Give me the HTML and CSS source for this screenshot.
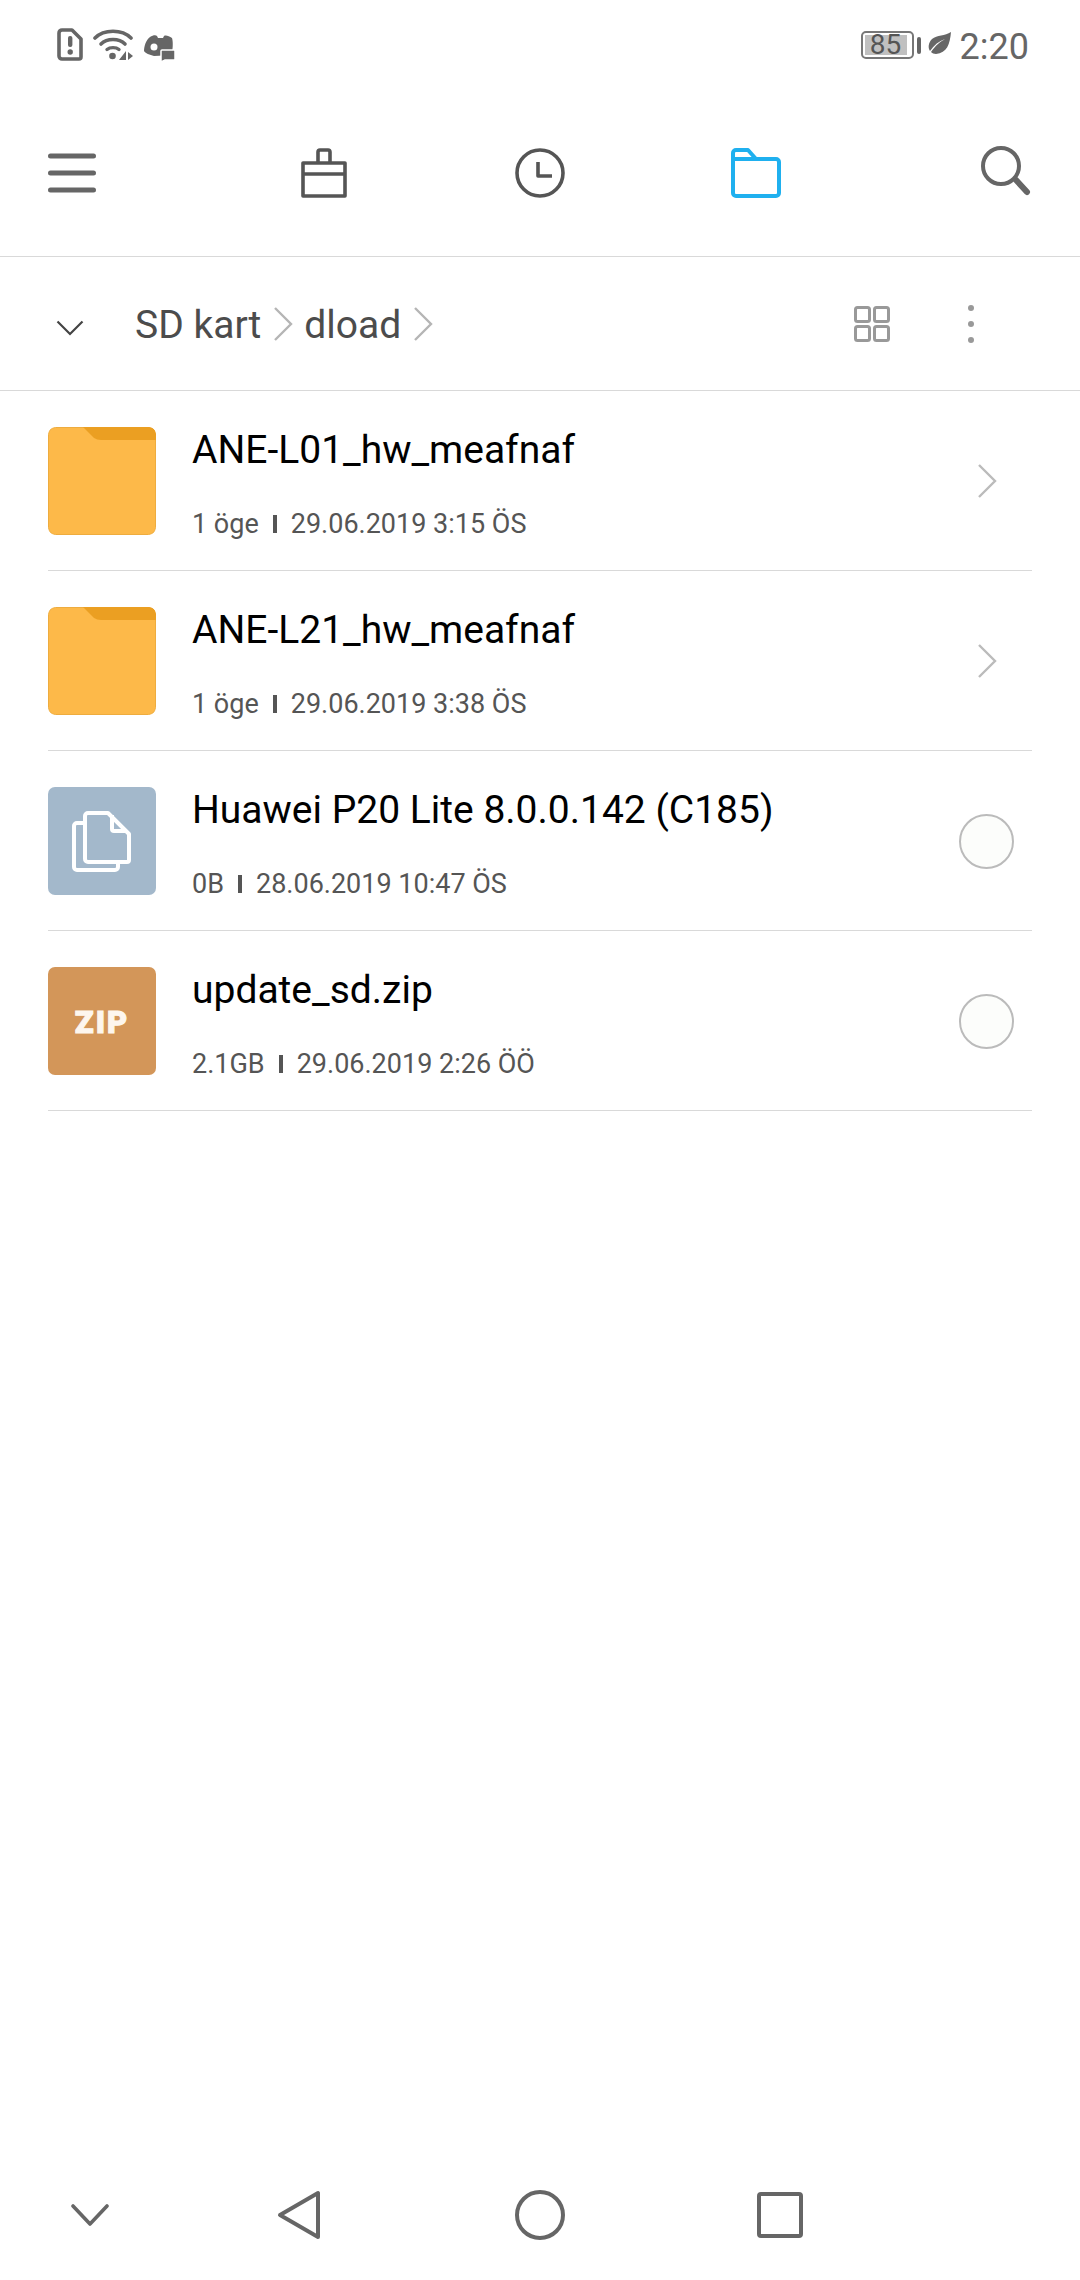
FILE: index.html
```html
<!DOCTYPE html>
<html lang="en">
<head>
  <meta charset="UTF-8" />
  <title>Dosyalar</title>
  <link rel="stylesheet" href="styles.css">
</head>
<body>
  <div class="phone">

    <div class="status-bar">
      <div class="status-left">
        <svg class="ico-sim" width="26" height="33" viewBox="0 0 26 33">
          <path d="M5 2h10l9 9v18a2 2 0 0 1-2 2H5a3 3 0 0 1-3-3V5a3 3 0 0 1 3-3z" fill="none" stroke="#666" stroke-width="3.6" stroke-linejoin="round"/>
          <rect x="11" y="8" width="4.4" height="11" rx="2" fill="#666"/>
          <circle cx="13.2" cy="24" r="2.7" fill="#666"/>
        </svg>
        <svg class="ico-wifi" width="40" height="33" viewBox="0 0 40 33">
          <path d="M2 10C11 1 29 1 38 10" fill="none" stroke="#666" stroke-width="3.6" stroke-linecap="round"/>
          <path d="M8 16C14 10 26 10 32 16" fill="none" stroke="#666" stroke-width="3.6" stroke-linecap="round"/>
          <path d="M14 21.500C17 19 23 19 26 21.500" fill="none" stroke="#666" stroke-width="3.4" stroke-linecap="round"/>
          <circle cx="19.500" cy="28" r="3.300" fill="#666"/>
          <path d="M33 23v9h-7zM35 24v8l5-4z" fill="#666"/>
        </svg>
        <svg class="ico-game" width="33" height="27" viewBox="0 0 33 27">
          <path d="M7 2C10 0 13 0 14 1l1 2h5l1-2c2-1 5 0 8 2 1 3 1 9 0 14-5 3-11 4-18 4-4-1-9-3-10-5C1 11 3 5 7 2z" fill="#666"/>
          <circle cx="11" cy="12" r="3.500" fill="#fff"/>
          <path d="M19 15h12a1 1 0 0 1 1 1v8a1 1 0 0 1-1 1H22l-4 2V16a1 1 0 0 1 1-1z" fill="#666" stroke="#fff" stroke-width="1.500"/>
        </svg>
      </div>
      <div class="status-right">
        <div class="battery"><span class="battery-level">85</span></div>
        <div class="battery-tip"></div>
        <svg class="ico-leaf" width="23" height="24" viewBox="0 0 23 24">
          <path d="M23 0C22 12 19 21 8 22 6 22 4 21 3 20 8 13 12 10 17 7 11 9 6 13 2 19 0 16 0 11 4 7 9 3 17 4 23 0z" fill="#666"/>
        </svg>
        <span class="clock">2:20</span>
      </div>
    </div>

    <div class="toolbar">
      <svg class="ico-menu" width="48" height="40" viewBox="0 0 48 40">
        <path d="M2.500 3h43M2.500 20h43M2.500 37h43" stroke="#666" stroke-width="5" stroke-linecap="round"/>
      </svg>
      <div class="tabs">
        <div class="tab">
          <svg width="46" height="50" viewBox="0 0 46 50">
            <path d="M2 15h42v33H2zM2 26h42M17 15V4a2 2 0 0 1 2-2h8a2 2 0 0 1 2 2v11" fill="none" stroke="#555" stroke-width="3.600" stroke-linejoin="round"/>
          </svg>
        </div>
        <div class="tab">
          <svg width="50" height="50" viewBox="0 0 50 50">
            <circle cx="25" cy="25" r="23" fill="none" stroke="#555" stroke-width="3.600"/>
            <path d="M23 14v14h14" fill="none" stroke="#555" stroke-width="3.600" stroke-linejoin="round"/>
          </svg>
        </div>
        <div class="tab">
          <svg width="50" height="50" viewBox="0 0 50 50">
            <path d="M5 2h12l8 9h20a3 3 0 0 1 3 3v31a3 3 0 0 1-3 3H5a3 3 0 0 1-3-3V5a3 3 0 0 1 3-3zM2 11h23" fill="none" stroke="#1fb0ef" stroke-width="4" stroke-linejoin="round"/>
          </svg>
        </div>
      </div>
      <svg class="ico-search" width="50" height="50" viewBox="0 0 50 50">
        <circle cx="20" cy="20" r="18" fill="none" stroke="#666" stroke-width="4"/>
        <path d="M35 34l11 12" stroke="#666" stroke-width="6" stroke-linecap="round"/>
      </svg>
    </div>

    <div class="breadcrumb">
      <svg class="crumb-toggle" width="28" height="16" viewBox="0 0 28 16">
        <path d="M1.500 1.500L14 14 26.500 1.500" fill="none" stroke="#444" stroke-width="2.200"/>
      </svg>
      <span class="crumb">SD kart</span>
      <svg class="crumb-sep" width="20" height="34" viewBox="0 0 20 34">
        <path d="M2 1l16 16L2 33" fill="none" stroke="#b5b5b5" stroke-width="2.400"/>
      </svg>
      <span class="crumb">dload</span>
      <svg class="crumb-sep" width="20" height="34" viewBox="0 0 20 34">
        <path d="M2 1l16 16L2 33" fill="none" stroke="#b5b5b5" stroke-width="2.400"/>
      </svg>
      <div class="crumb-actions">
        <svg width="36" height="36" viewBox="0 0 36 36">
          <g fill="none" stroke="#999" stroke-width="3">
            <rect x="1.500" y="1.500" width="14" height="14" rx="2"/>
            <rect x="20.500" y="1.500" width="14" height="14" rx="2"/>
            <rect x="1.500" y="20.500" width="14" height="14" rx="2"/>
            <rect x="20.500" y="20.500" width="14" height="14" rx="2"/>
          </g>
        </svg>
        <svg width="6" height="38" viewBox="0 0 6 38">
          <g fill="#999"><circle cx="3" cy="3" r="3"/><circle cx="3" cy="19" r="3"/><circle cx="3" cy="35" r="3"/></g>
        </svg>
      </div>
    </div>

    <div class="file-list">
      <div class="file-row">
        <svg class="file-icon" width="108" height="108" viewBox="0 0 108 108">
          <rect x="0.500" y="0.500" width="107" height="107" rx="7" fill="#fdb949" stroke="#eeac3f"/>
          <path d="M35 0H101a7 7 0 0 1 7 7V13H53Q49 13 46 11z" fill="#eb9f22"/>
        </svg>
        <div class="file-info">
          <div class="file-name">ANE-L01_hw_meafnaf</div>
          <div class="file-meta"><span>1 öge</span><i class="meta-sep"></i><span>29.06.2019 3:15 ÖS</span></div>
        </div>
        <svg class="row-chevron" width="20" height="34" viewBox="0 0 20 34">
          <path d="M2 1l16 16L2 33" fill="none" stroke="#bbb" stroke-width="2.400"/>
        </svg>
      </div>

      <div class="file-row">
        <svg class="file-icon" width="108" height="108" viewBox="0 0 108 108">
          <rect x="0.500" y="0.500" width="107" height="107" rx="7" fill="#fdb949" stroke="#eeac3f"/>
          <path d="M35 0H101a7 7 0 0 1 7 7V13H53Q49 13 46 11z" fill="#eb9f22"/>
        </svg>
        <div class="file-info">
          <div class="file-name">ANE-L21_hw_meafnaf</div>
          <div class="file-meta"><span>1 öge</span><i class="meta-sep"></i><span>29.06.2019 3:38 ÖS</span></div>
        </div>
        <svg class="row-chevron" width="20" height="34" viewBox="0 0 20 34">
          <path d="M2 1l16 16L2 33" fill="none" stroke="#bbb" stroke-width="2.400"/>
        </svg>
      </div>

      <div class="file-row">
        <div class="file-icon icon-doc">
          <svg width="108" height="108" viewBox="0 0 108 108">
            <path d="M37 36h-8a3 3 0 0 0-3 3v41a3 3 0 0 0 3 3h38a3 3 0 0 0 3-3v-5" fill="none" stroke="#fff" stroke-width="4"/>
            <path d="M40 26h20l21 21v26a2 2 0 0 1-2 2H40a3 3 0 0 1-3-3V29a3 3 0 0 1 3-3z" fill="none" stroke="#fff" stroke-width="4" stroke-linejoin="round"/>
            <path d="M64 28v14a2 2 0 0 0 2 2h13" fill="none" stroke="#fff" stroke-width="4"/>
          </svg>
        </div>
        <div class="file-info">
          <div class="file-name">Huawei P20 Lite 8.0.0.142 (C185)</div>
          <div class="file-meta"><span>0B</span><i class="meta-sep"></i><span>28.06.2019 10:47 ÖS</span></div>
        </div>
        <div class="row-radio"></div>
      </div>

      <div class="file-row">
        <div class="file-icon icon-zip">ZIP</div>
        <div class="file-info">
          <div class="file-name">update_sd.zip</div>
          <div class="file-meta"><span>2.1GB</span><i class="meta-sep"></i><span>29.06.2019 2:26 ÖÖ</span></div>
        </div>
        <div class="row-radio"></div>
      </div>
    </div>

    <div class="nav-bar">
      <svg class="nav-down" width="38" height="22" viewBox="0 0 38 22">
        <path d="M2 2L19 20 36 2" fill="none" stroke="#666" stroke-width="3.600" stroke-linecap="round" stroke-linejoin="round"/>
      </svg>
      <svg class="nav-back" width="44" height="50" viewBox="0 0 44 50">
        <path d="M41 3V47L3 25z" fill="none" stroke="#666" stroke-width="4" stroke-linejoin="round"/>
      </svg>
      <svg class="nav-home" width="50" height="50" viewBox="0 0 50 50">
        <circle cx="25" cy="25" r="23" fill="none" stroke="#666" stroke-width="4"/>
      </svg>
      <svg class="nav-recent" width="46" height="46" viewBox="0 0 46 46">
        <rect x="2" y="2" width="42" height="42" rx="2" fill="none" stroke="#666" stroke-width="4"/>
      </svg>
    </div>

  </div>
</body>
</html>
```

FILE: styles.css
```css
body {
  margin: 0;
  background: #fff;
  font-family: Roboto, sans-serif;
}

.phone {
  width: 1080px;
  height: 2280px;
  display: flex;
  flex-direction: column;
  background: #fff;
  overflow: hidden;
}

/* status bar */
.status-bar {
  height: 90px;
  box-sizing: border-box;
  padding: 28px 51px 0 57px;
  display: flex;
  justify-content: space-between;
  align-items: flex-start;
}

.status-left {
  display: flex;
  align-items: flex-start;
}

.ico-wifi {
  margin-left: 10px;
}

.ico-game {
  margin-left: 10px;
  margin-top: 7px;
}

.status-right {
  display: flex;
  align-items: flex-start;
  color: #666;
}

.battery {
  width: 53px;
  height: 28px;
  margin-top: 3px;
  box-sizing: border-box;
  border: 2px solid #777;
  border-radius: 5px;
  padding: 2px;
  display: flex;
}

.battery-level {
  width: 42px;
  background: #c0c0c0;
  color: #555;
  font-size: 28px;
  line-height: 20px;
  text-align: center;
}

.battery-tip {
  width: 4px;
  height: 17px;
  margin: 9px 0 0 3px;
  background: #666;
  border-radius: 2px;
}

.ico-leaf {
  margin: 4px 0 0 7px;
}

.clock {
  margin: 1px 0 0 9px;
  font-size: 36px;
  line-height: 36px;
}

/* tab toolbar */
.toolbar {
  height: 167px;
  box-sizing: border-box;
  padding: 0 49px 58px 48px;
  border-bottom: 1px solid #d9d9d9;
  display: flex;
  align-items: flex-end;
}

.ico-menu {
  margin-bottom: 5px;
}

.tabs {
  display: flex;
  margin-left: 120px;
}

.tab {
  width: 216px;
  display: flex;
  justify-content: center;
}

.ico-search {
  margin: 0 0 2px auto;
}

/* breadcrumb */
.breadcrumb {
  height: 134px;
  box-sizing: border-box;
  padding: 0 0 0 56px;
  border-bottom: 1px solid #d9d9d9;
  display: flex;
  align-items: center;
  color: #4c4c4c;
}

.crumb-toggle {
  margin: 9px 51px 0 0;
}

.crumb {
  margin-top: 2px;
  font-size: 39px;
}

.crumb-sep {
  margin: 0 11px 0 12px;
}

.crumb-actions {
  margin-left: auto;
  margin-right: 106px;
  display: flex;
  align-items: center;
  gap: 78px;
}

/* file list */
.file-list {
  flex: 1;
  padding: 0 48px;
}

.file-row {
  height: 180px;
  box-sizing: border-box;
  border-bottom: 1px solid #d9d9d9;
  display: flex;
  align-items: center;
}

.file-icon {
  width: 108px;
  height: 108px;
  flex: none;
  margin: 0 36px 0 0;
  border-radius: 7px;
}

.icon-doc {
  background: #a3b8cb;
}

.icon-zip {
  background: #d39659;
  color: #fdf6ee;
  font-size: 31px;
  font-weight: 900;
  letter-spacing: 2px;
  line-height: 112px;
  text-align: center;
  -webkit-text-stroke: 1px #fdf6ee;
}

.file-info {
  flex: 1;
  align-self: flex-start;
  padding-top: 35px;
}

.file-name {
  font-size: 39px;
  line-height: 48px;
  color: #000;
}

.file-meta {
  margin-top: 34px;
  font-size: 27px;
  line-height: 32px;
  color: #555;
  display: flex;
  align-items: center;
}

.meta-sep {
  width: 4px;
  height: 18px;
  margin: 0 14px;
  background: #555;
}

.row-chevron {
  margin-right: 35px;
}

.row-radio {
  width: 55px;
  height: 55px;
  box-sizing: border-box;
  margin: 2px 18px 0 0;
  border: 2px solid #bbb;
  border-radius: 50%;
  background: #fcfdfb;
}

/* navigation bar */
.nav-bar {
  height: 90px;
  display: flex;
  align-items: flex-start;
  padding: 0 0 0 71px;
}

.nav-down {
  margin: 14px 0 0 0;
}

.nav-back {
  margin-left: 168px;
}

.nav-home {
  margin-left: 194px;
}

.nav-recent {
  margin: 2px 0 0 192px;
}
```
